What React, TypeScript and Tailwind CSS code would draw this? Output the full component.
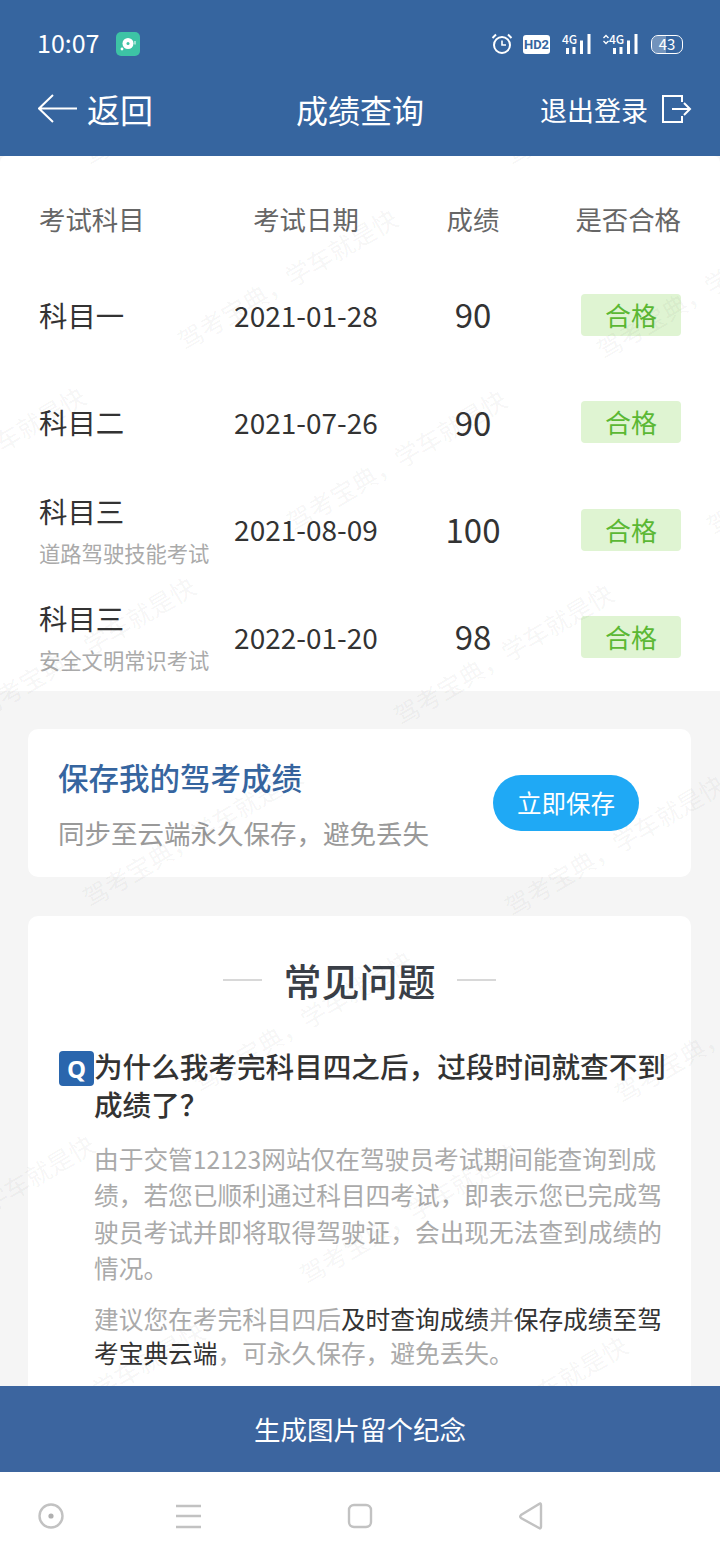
const rows = [
  { name: '科目一', sub: '', date: '2021-01-28', score: 90 },
  { name: '科目二', sub: '', date: '2021-07-26', score: 90 },
  { name: '科目三', sub: '道路驾驶技能考试', date: '2021-08-09', score: 100 },
  { name: '科目三', sub: '安全文明常识考试', date: '2022-01-20', score: 98 },
];

// start point (bottom left) of each watermark line
const marks = [
  [514, 170], [92, 170],
  [187, 355], [606, 364],
  [-125, 533], [296, 536], [716, 540],
  [-15, 723], [403, 730],
  [92, 912], [514, 921],
  [202, 1097], [624, 1108],
  [-116, 1281], [309, 1289],
  [-6, 1468], [417, 1482],
];

function Signal({ arrows }: { arrows?: boolean }) {
  return (
    <svg width={arrows ? 36 : 29} height="20" viewBox={arrows ? '-7 0 36 20' : '0 0 29 20'} className="block overflow-visible">
      {arrows && (
        <g fill="none" stroke="#fff" strokeWidth="1.4">
          <path d="M-5.5 4 L-3 1.5 L-0.5 4" />
          <path d="M-5.5 7 L-3 9.5 L-0.5 7" />
        </g>
      )}
      <text x="0" y="10" fontSize="12" fontWeight="500" fill="#fff">4G</text>
      <rect x="4" y="14" width="3" height="6" fill="#fff" />
      <rect x="10.5" y="13" width="3" height="7" fill="#fff" />
      <rect x="18" y="6.5" width="3" height="13.5" fill="#fff" />
      <rect x="25.5" y="0" width="3" height="20" fill="#fff" />
    </svg>
  );
}

function StatusBar() {
  return (
    <div className="h-[88px] pl-[37px] pr-[37px] flex items-center justify-between text-white">
      <div className="flex items-center gap-[17px]">
        <span className="text-[25px] leading-none mb-[4px]">10:07</span>
        <svg width="24" height="24" viewBox="0 0 24 24" className="block">
          <rect width="24" height="24" rx="5" fill="#3dc3a5" />
          <circle cx="12" cy="11.5" r="5.5" fill="#fff" />
          <circle cx="12" cy="11.5" r="1.5" fill="#3dc3a5" />
          <circle cx="6" cy="17" r="1.4" fill="#fff" />
          <rect x="18.5" y="9" width="1" height="3.5" fill="#fff" />
        </svg>
      </div>
      <div className="flex items-center">
        <svg width="22" height="22" viewBox="0 0 22 22" fill="none" stroke="#fff" strokeWidth="2" className="block">
          <circle cx="11" cy="12" r="8" />
          <path d="M11 7.5 V12 H15" strokeWidth="1.6" />
          <path d="M1.5 5 L5 1.5 M20.5 5 L17 1.5" />
        </svg>
        <span className="ml-[10px] w-[27px] h-[19px] bg-white rounded-[3px] text-[#36659f] text-[13px] font-bold leading-[19px] text-center font-['Roboto',sans-serif]">HD2</span>
        <span className="ml-[12px]"><Signal /></span>
        <span className="ml-[11px]"><Signal arrows /></span>
        <span className="relative ml-[13px] w-[32px] h-[19px] rounded-[7px] border-[1.5px] border-white overflow-hidden">
          <span className="absolute left-0 top-0 bottom-0 w-[14px] bg-white/30" />
          <span className="absolute inset-0 text-center text-[15px] leading-[16px]">43</span>
        </span>
      </div>
    </div>
  );
}

function Header() {
  return (
    <header className="h-[156px] shrink-0 bg-[#36659f] text-white">
      <StatusBar />
      <div className="h-[46px] pl-[38px] pr-[28px] flex items-center justify-between">
        <div className="w-[190px] flex items-center gap-[10px]">
          <svg width="39" height="29" viewBox="0 0 39 29" fill="none" stroke="#fff" strokeWidth="2" className="block -mt-[5px]">
            <path d="M39 14.5 H1 M15 1 L1 14.5 L15 28" />
          </svg>
          <span className="text-[33px] leading-none mb-[4px]">返回</span>
        </div>
        <span className="text-[32px] leading-none mb-[4px]">成绩查询</span>
        <div className="w-[200px] flex items-center justify-end gap-[14px]">
          <span className="text-[27px] leading-none mb-[4px]">退出登录</span>
          <svg width="30" height="30" viewBox="0 0 30 30" fill="none" stroke="#fff" strokeWidth="2" className="block -mt-[4px]">
            <path d="M20 8 V2 H1 V28 H20 V22 M10 15 H28 M22 9 L28 15 L22 21" />
          </svg>
        </div>
      </div>
    </header>
  );
}

function ScoreTable() {
  return (
    <section className="h-[535px] bg-white rounded-t-[6px] pt-[20px] px-[39px] text-[#333]">
      <div className="h-[85.5px] grid grid-cols-[181px_172px_162px_127px] items-center text-[26.4px] text-[#666]">
        <span>考试科目</span>
        <span className="text-center">考试日期</span>
        <span className="text-center">成绩</span>
        <span className="text-right whitespace-nowrap">是否合格</span>
      </div>
      {rows.map((r) => (
        <div key={r.date} className="h-[107.33px] grid grid-cols-[181px_172px_162px_127px] items-center">
          <div className={r.sub ? 'mb-[1px]' : ''}>
            <div className="text-[28.4px] leading-[40px]">{r.name}</div>
            {r.sub && <div className="mt-[7px] text-[21.3px] leading-[30px] text-[#aaa]">{r.sub}</div>}
          </div>
          <span className="text-[28px] text-center mb-[1px]">{r.date}</span>
          <span className="text-[33px] text-center">{r.score}</span>
          <div className="flex justify-end">
            <span className="w-[100px] h-[42px] rounded-[4px] bg-[#dff4d2] text-[#5bb834] text-[26px] leading-[42px] text-center">合格</span>
          </div>
        </div>
      ))}
    </section>
  );
}

function SaveCard() {
  return (
    <section className="mt-[38px] ml-[28px] mr-[29px] h-[148px] bg-white rounded-[10px] pl-[30px] pr-[52px] flex items-center justify-between">
      <div className="pt-[3px]">
        <div className="text-[30.5px] leading-[44px] font-medium text-[#36659f]">保存我的驾考成绩</div>
        <div className="mt-[12px] text-[26.5px] leading-[44px] text-[#999]">同步至云端永久保存，避免丢失</div>
      </div>
      <button className="w-[146px] h-[56px] rounded-full bg-[#1fa9f5] text-white text-[24.5px]">立即保存</button>
    </section>
  );
}

function Faq() {
  return (
    <section className="mt-[39px] ml-[28px] mr-[29px] bg-white rounded-[10px] pt-[36px] pb-[40px]">
      <div className="flex items-center justify-center gap-[21px]">
        <span className="w-[39px] h-[2px] bg-[#d8d8d8]" />
        <h2 className="text-[38px] leading-[56px] font-medium text-[#3a3f47]">常见问题</h2>
        <span className="w-[39px] h-[2px] bg-[#d8d8d8]" />
      </div>
      <div className="mt-[40px] pl-[31px] pr-[21px] flex items-start">
        <span className="mt-[3px] w-[35px] h-[35px] shrink-0 rounded-[4px] bg-[#2a66ad] text-white text-[24px] font-bold leading-[35px] text-center font-['Open_Sans',sans-serif]">Q</span>
        <p className="-mt-[1px] text-[28.6px] leading-[38px] font-medium text-[#333]">为什么我考完科目四之后，过段时间就查不到成绩了？</p>
      </div>
      <div className="mt-[17px] ml-[66px] mr-[26px] text-[24.7px] text-[#aaa]">
        <p className="leading-[36.4px]">由于交管12123网站仅在驾驶员考试期间能查询到成绩，若您已顺利通过科目四考试，即表示您已完成驾驶员考试并即将取得驾驶证，会出现无法查到成绩的情况。</p>
        <p className="mt-[15px] leading-[34px]">
          建议您在考完科目四后<span className="text-[#333]">及时查询成绩</span>并<span className="text-[#333]">保存成绩至驾考宝典云端</span>，可永久保存，避免丢失。
        </p>
      </div>
    </section>
  );
}

function NavBar() {
  return (
    <nav className="h-[88px] shrink-0 bg-white">
      <svg width="720" height="88" viewBox="0 0 720 88" fill="none" stroke="#c2c2c2" strokeWidth="2.4" className="block">
        <circle cx="51" cy="44" r="11.5" />
        <circle cx="51" cy="44" r="2.6" fill="#b0b0b0" stroke="none" />
        <path d="M176 34 H201 M176 44 H201 M176 55 H201" />
        <rect x="349" y="33" width="22" height="22" rx="5" />
        <path d="M541 33 C541 31 540 31 539 32 L521 43 C520 44 520 45 521 46 L539 56 C540 57 541 56 541 55 Z" />
      </svg>
    </nav>
  );
}

export default function App() {
  return (
    <div className="relative w-[720px] h-[1560px] overflow-hidden flex flex-col bg-[#f5f5f5] font-['Noto_Sans_CJK_SC','Noto_Sans',sans-serif]">
      <Header />
      <main className="flex-1 min-h-0 overflow-hidden">
        <ScoreTable />
        <SaveCard />
        <Faq />
      </main>
      <button className="h-[86px] shrink-0 bg-[#3c659f] text-white text-[26.5px]">生成图片留个纪念</button>
      <NavBar />

      {/* watermark, sits over the scrolling content */}
      <div className="absolute left-0 right-0 top-[156px] h-[1230px] overflow-hidden pointer-events-none">
        {marks.map(([x, y]) => (
          <span
            key={`${x}-${y}`}
            className="absolute origin-bottom-left -rotate-[30.7deg] whitespace-nowrap text-[25px] leading-[30px] text-black/[0.05]"
            style={{ left: x, top: y - 156 - 30 }}
          >
            驾考宝典，学车就是快
          </span>
        ))}
      </div>
    </div>
  );
}
